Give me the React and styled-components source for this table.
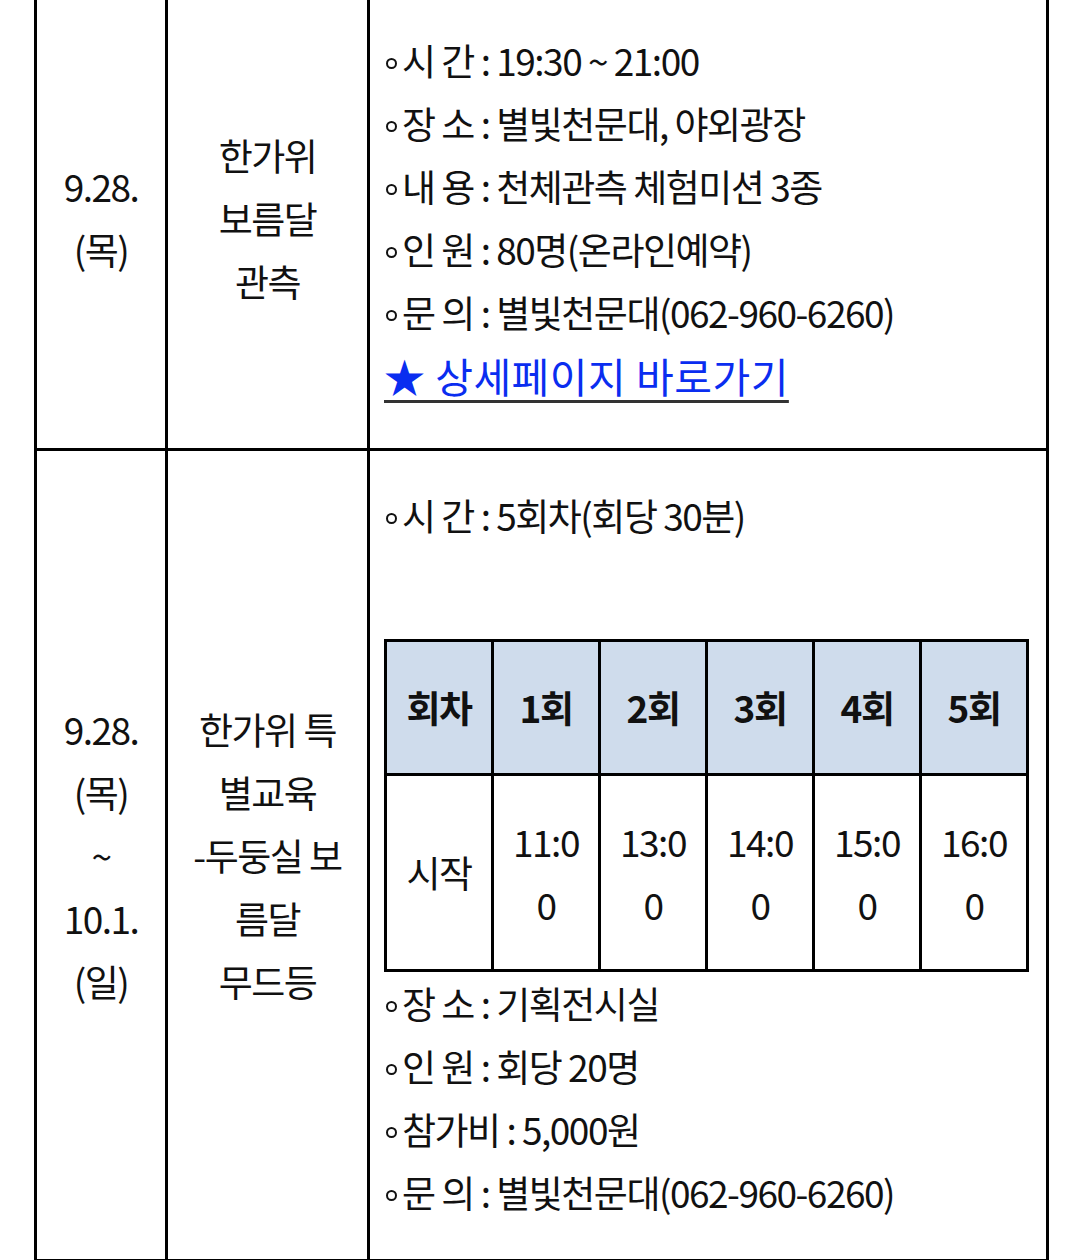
import React from "react";
import styled, { createGlobalStyle } from "styled-components";

const GlobalStyle = createGlobalStyle`
  html, body {
    margin: 0;
    padding: 0;
    background: #ffffff;
  }
  body {
    font-family: "Noto Sans CJK KR", "Noto Sans", sans-serif;
    color: #111111;
  }
`;

const times = ["11:00", "13:00", "14:00", "15:00", "16:00"];

const Page = styled.div`
  width: 1080px;
  height: 1260px;
  overflow: hidden;
`;

const Schedule = styled.table`
  margin: -15px 0 0 34px;
  width: 1012px;
  border-collapse: collapse;
  table-layout: fixed;
  font-size: 37px;
  letter-spacing: -1.5px;
  line-height: 63px;
`;

const Cell = styled.td`
  border: 3px solid #000;
  vertical-align: middle;
  text-align: ${(p) => (p.$left ? "left" : "center")};
  padding: ${(p) =>
    p.$left ? `${p.$top}px 12px ${p.$bottom}px 14px` : "0 12px"};
`;

const Item = styled.div`
  white-space: nowrap;
  height: 63px;
  font-size: ${(p) => (p.$big ? "41px" : "inherit")};
`;

const Dot = styled.span`
  display: inline-block;
  width: 7px;
  height: 7px;
  border: 2px solid #111;
  border-radius: 50%;
  margin: 0 5px 4px 2px;
  vertical-align: middle;
`;

const DetailLink = styled.a`
  color: #0a2df0;
  letter-spacing: 0.5px;
  text-decoration: underline;
  text-decoration-color: #333;
  text-decoration-thickness: 3px;
  text-underline-offset: 7px;
`;

const Rounds = styled.table`
  width: 645px;
  margin: 92px 0 0 0;
  border-collapse: collapse;
  table-layout: fixed;
`;

const Head = styled.th`
  height: 131px;
  border: 3px solid #000;
  background: #cfdcec;
  font-weight: 700;
  text-align: center;
  padding: 0;
`;

const Time = styled.td`
  height: 193px;
  border: 3px solid #000;
  text-align: center;
  vertical-align: middle;
  padding: 0 12px;
  word-break: break-all;
`;

const Line = ({ label, children }) => (
  <Item>
    <Dot />
    {label} : {children}
  </Item>
);

const Lines = ({ items }) =>
  items.map((t, i) => (
    <React.Fragment key={t}>
      {i > 0 && <br />}
      {t}
    </React.Fragment>
  ));

export default function App() {
  return (
    <Page>
      <GlobalStyle />
      <Schedule>
        <colgroup>
          <col style={{ width: 131 }} />
          <col style={{ width: 202 }} />
          <col style={{ width: 679 }} />
        </colgroup>
        <tbody>
          <tr>
            <Cell>
              <Lines items={["9.28.", "(목)"]} />
            </Cell>
            <Cell>
              <Lines items={["한가위", "보름달", "관측"]} />
            </Cell>
            <Cell $left $top={41} $bottom={41}>
              <Line label="시 간">19:30 ~ 21:00</Line>
              <Line label="장 소">별빛천문대, 야외광장</Line>
              <Line label="내 용">천체관측 체험미션 3종</Line>
              <Line label="인 원">80명(온라인예약)</Line>
              <Line label="문 의">별빛천문대(062-960-6260)</Line>
              <Item $big>
                <DetailLink href="#">★ 상세페이지 바로가기</DetailLink>
              </Item>
            </Cell>
          </tr>
          <tr>
            <Cell>
              <Lines items={["9.28.", "(목)", "~", "10.1.", "(일)"]} />
            </Cell>
            <Cell>
              <Lines items={["한가위 특", "별교육", "-두둥실 보", "름달", "무드등"]} />
            </Cell>
            <Cell $left $top={33} $bottom={35}>
              <Line label="시 간">5회차(회당 30분)</Line>
              <Rounds>
                <thead>
                  <tr>
                    <Head>회차</Head>
                    {times.map((t, i) => (
                      <Head key={t}>{i + 1}회</Head>
                    ))}
                  </tr>
                </thead>
                <tbody>
                  <tr>
                    <Time>시작</Time>
                    {times.map((t) => (
                      <Time key={t}>{t}</Time>
                    ))}
                  </tr>
                </tbody>
              </Rounds>
              <Line label="장 소">기획전시실</Line>
              <Line label="인 원">회당 20명</Line>
              <Line label="참가비">5,000원</Line>
              <Line label="문 의">별빛천문대(062-960-6260)</Line>
            </Cell>
          </tr>
        </tbody>
      </Schedule>
    </Page>
  );
}
